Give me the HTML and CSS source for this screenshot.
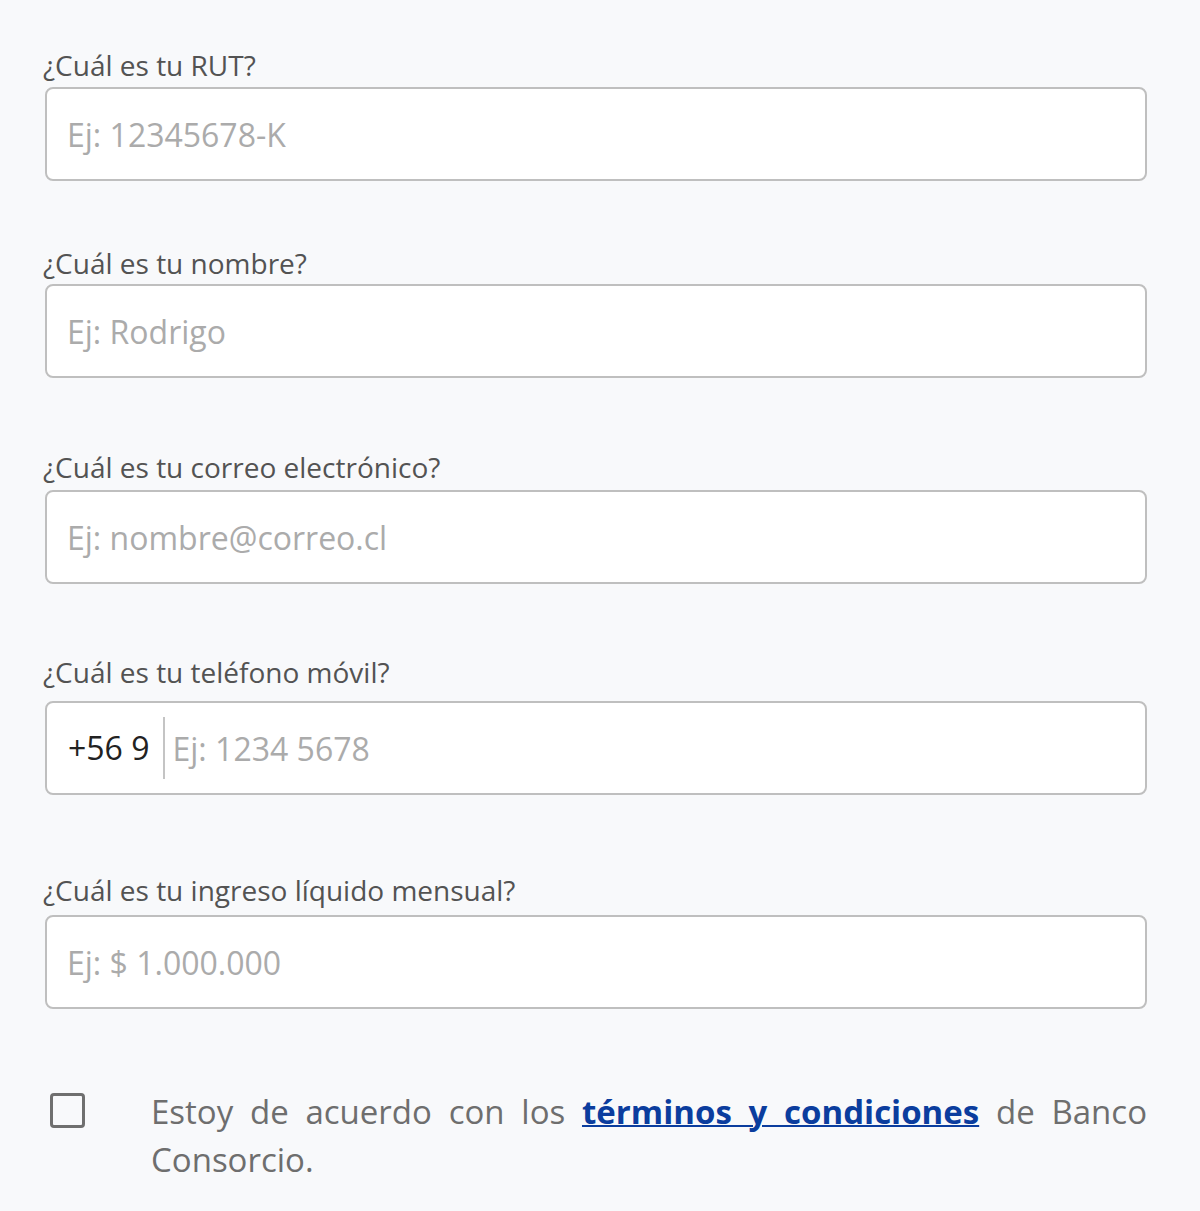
FILE: index.html
```html
<html><head>
<meta charset="utf-8">
<meta name="viewport" content="width=device-width, initial-scale=1">
<title>Solicitud - Banco Consorcio</title>
<link rel="stylesheet" href="styles.css">
</head>
<body>
  <form class="form">
    <div class="field field-rut">
      <label class="field-label" for="rut">¿Cuál es tu RUT?</label>
      <div class="field-box">
        <input class="field-input" id="rut" type="text" placeholder="Ej: 12345678-K">
      </div>
    </div>

    <div class="field field-name">
      <label class="field-label" for="nombre">¿Cuál es tu nombre?</label>
      <div class="field-box">
        <input class="field-input" id="nombre" type="text" placeholder="Ej: Rodrigo">
      </div>
    </div>

    <div class="field field-mail">
      <label class="field-label" for="correo">¿Cuál es tu correo electrónico?</label>
      <div class="field-box">
        <input class="field-input" id="correo" type="text" placeholder="Ej: nombre@correo.cl">
      </div>
    </div>

    <div class="field field-phone">
      <label class="field-label" for="telefono">¿Cuál es tu teléfono móvil?</label>
      <div class="field-box">
        <span class="phone-prefix">+56 9</span>
        <input class="field-input phone-input" id="telefono" type="text" placeholder="Ej: 1234 5678">
      </div>
    </div>

    <div class="field field-income">
      <label class="field-label" for="ingreso">¿Cuál es tu ingreso líquido mensual?</label>
      <div class="field-box">
        <input class="field-input" id="ingreso" type="text" placeholder="Ej: $ 1.000.000">
      </div>
    </div>

    <div class="terms">
      <span class="terms-check"></span>
      <p class="terms-text">Estoy de acuerdo con los <a href="#">términos y condiciones</a> de Banco Consorcio.</p>
    </div>
  </form>
</body>
</html>
```

FILE: styles.css
```css
body, html {
  margin: 0;
  padding: 0;
  font-family: 'Open Sans', sans-serif;
  background-color: #f8f9fb;
}
.form {
  padding: 47px 53px 0 45px;
}
.field-label {
  display: block;
  margin-left: -2px;
  font-size: 28px;
  line-height: 36px;
  color: #535353;
}
.field-box {
  display: flex;
  align-items: center;
  height: 94px;
  box-sizing: border-box;
  background-color: #fff;
  border: 2px solid #bfbfbf;
  border-radius: 8px;
}
.field-input {
  flex: 1;
  min-width: 0;
  height: 100%;
  padding: 0 0 0 20px;
  border: none;
  background: transparent;
  outline: none;
  font-family: 'Open Sans', sans-serif;
  font-size: 32px;
  color: #333;
}
.field-input::placeholder {
  color: #ababab;
}

/* spacing between the questions */
.field-rut .field-label { margin-bottom: 4px; }
.field-name .field-label { margin-bottom: 3px; }
.field-mail .field-label { margin-bottom: 5px; }
.field-phone .field-label { margin-bottom: 11px; }
.field-income .field-label { margin-bottom: 7px; }
.field-rut { margin-bottom: 64px; }
.field-name { margin-bottom: 71px; }
.field-mail { margin-bottom: 70px; }
.field-phone { margin-bottom: 77px; }
.field-income { margin-bottom: 79px; }

.phone-prefix {
  padding: 0 13px 0 21px;
  border-right: 2px solid #c4c4c4;
  line-height: 62px;
  font-size: 32px;
  color: #222;
}
.phone-input {
  padding-left: 8px;
}
.terms {
  display: flex;
  align-items: flex-start;
}
.terms-check {
  flex: none;
  width: 29px;
  height: 29px;
  margin: 5px 0 0 5px;
  border: 3px solid #6f6f6f;
  border-radius: 4px;
}
.terms-text {
  flex: 1;
  margin: 0 0 0 66px;
  font-size: 33px;
  line-height: 48px;
  text-align: justify;
  color: #6e6e6e;
}
.terms-text a {
  color: #0b3d9e;
  font-weight: bold;
  text-decoration: underline;
  text-decoration-thickness: 2px;
}
```
